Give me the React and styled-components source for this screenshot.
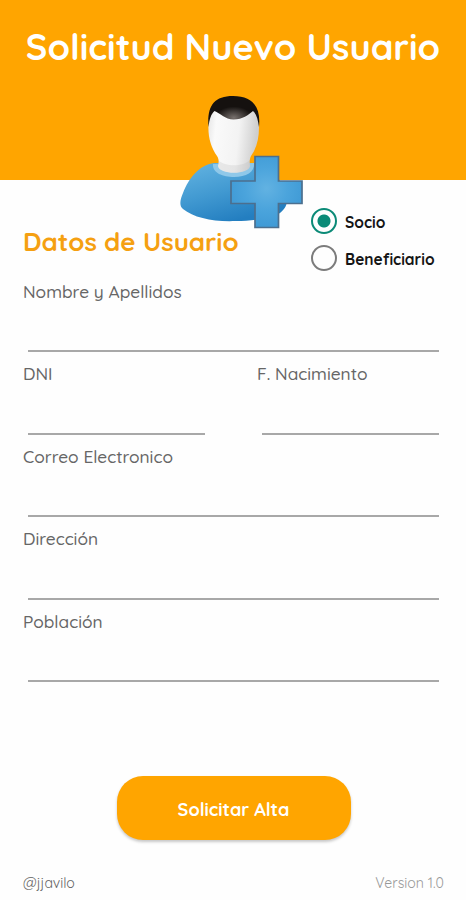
import { useState } from 'react';
import styled, { createGlobalStyle } from 'styled-components';

const GlobalStyle = createGlobalStyle`
  * {
    box-sizing: border-box;
  }
  body {
    margin: 0;
    background: #fefefe;
    font-family: Quicksand, Lato, 'Open Sans', sans-serif;
  }
`;

const Screen = styled.div`
  display: flex;
  flex-direction: column;
  width: 466px;
  height: 900px;
  background: #fefefe;
  overflow: hidden;
`;

const Header = styled.header`
  display: flex;
  flex-direction: column;
  align-items: center;
  flex: none;
  height: 180px;
  background: #ffa500;
`;

const Title = styled.h1`
  margin: 25px 0 0;
  font-weight: 700;
  font-size: 36.2px;
  line-height: 44px;
  white-space: nowrap;
  color: white;
`;

const Avatar = styled.svg`
  flex: none;
  width: 150px;
  height: 150px;
  margin: 16px 0 0 24px;
`;

const Form = styled.form`
  display: flex;
  flex-direction: column;
  flex: 1;
  padding: 24px 22px 0 23px;
`;

const Heading = styled.div`
  display: flex;
  justify-content: space-between;
  height: 76.6px;
`;

const Subtitle = styled.h2`
  margin: 21px 0 0;
  font-weight: 700;
  font-size: 25.9px;
  line-height: 32px;
  white-space: nowrap;
  color: #f5a011;
`;

const RadioGroup = styled.div`
  display: flex;
  flex-direction: column;
  width: 133px;
`;

const RadioOption = styled.label`
  display: flex;
  align-items: center;
  gap: 8px;
  height: 36.5px;
  font-weight: 700;
  font-size: 15.5px;
  color: #151515;
`;

const Radio = styled.input`
  appearance: none;
  flex: none;
  width: 26px;
  height: 26px;
  margin: -2px 0 0;
  border: 2.5px solid #7c7c7c;
  border-radius: 50%;
  &:checked {
    border-color: #0b8a77;
    background: radial-gradient(circle, #0b8a77 6px, transparent 7px);
  }
`;

const Row = styled.div`
  display: flex;
  justify-content: space-between;
`;

const Field = styled.label`
  display: flex;
  flex-direction: column;
  justify-content: space-between;
  width: ${({ $width }) => $width || '100%'};
  height: 71.5px;
  margin-bottom: 11px;
`;

const Label = styled.span`
  font-weight: 500;
  font-size: 17.3px;
  line-height: 21px;
  white-space: nowrap;
  color: #666;
`;

const Input = styled.input`
  height: 36px;
  margin: 0 5px;
  padding: 0 4px;
  border: 0;
  border-bottom: 2px solid #a8a8a8;
  outline: none;
  background: transparent;
  font: inherit;
`;

const SubmitButton = styled.button`
  align-self: center;
  width: 234px;
  height: 64px;
  margin-top: 83px;
  padding: 3px 0 0;
  border: 0;
  border-radius: 26px;
  background: #ffa500;
  box-shadow: 0 2px 3px rgba(0, 0, 0, 0.22);
  font-family: inherit;
  font-weight: 700;
  font-size: 18.1px;
  color: white;
`;

const Footer = styled.footer`
  display: flex;
  justify-content: space-between;
  height: 30px;
  padding: 2px 22px 0 23px;
  font-size: 14.1px;
  line-height: 22px;
`;

const Author = styled.span`
  color: #666;
`;

const Version = styled.span`
  color: #999;
`;

const NewUserIcon = () => (
  <Avatar viewBox="0 0 150 150">
    <defs>
      <linearGradient id="body" x1="0" y1="0" x2="0.5" y2="1">
        <stop offset="0" stopColor="#65b5e2" />
        <stop offset="0.55" stopColor="#4199d1" />
        <stop offset="1" stopColor="#237ec0" />
      </linearGradient>
      <linearGradient id="face" x1="0" y1="0" x2="1" y2="0.15">
        <stop offset="0" stopColor="#e3e3e3" />
        <stop offset="0.2" stopColor="#fafafa" />
        <stop offset="0.65" stopColor="#f3f3f3" />
        <stop offset="1" stopColor="#cfcfcf" />
      </linearGradient>
      <radialGradient id="hair" cx="0.5" cy="0.7" r="0.36">
        <stop offset="0" stopColor="#77706d" />
        <stop offset="1" stopColor="#15110f" />
      </radialGradient>
      <radialGradient id="plus" cx="0.5" cy="0.45" r="0.6">
        <stop offset="0" stopColor="#62b2e2" />
        <stop offset="0.5" stopColor="#4ba4dc" />
        <stop offset="1" stopColor="#3d98d4" />
      </radialGradient>
    </defs>
    <path
      d="M44 78C29 80 19 93 13 108C10 115 9 121 13 124C24 133 44 137 66 136C84 136 101 133 110 128C118 122 119 114 114 104C108 89 98 80 82 78Z"
      fill="url(#body)"
    />
    <path
      d="M43 79C42 88 53 92 64 92C76 92 85 87 84 78Z"
      fill="#8fc8e9"
    />
    <path
      d="M39 34C40 21 49 14 63 14C77 14 87 21 88.5 34C90 49 88 61 81 71C79.5 74 79.5 77 80 81C79 90 49 90 48 81C49 77 49 74 47 71C40 61 37 49 39 34Z"
      fill="url(#face)"
    />
    <path
      d="M48 75C55 82 73 82 80 75L80 81C79 90 49 90 48 81Z"
      fill="#aaa"
      opacity="0.2"
    />
    <path
      d="M38.5 42C37 22 43 11 63 11C83 11 91 22 89 42C88 35 86.5 29 83 26C78 30 73 34.5 63.5 34.5C55 34.5 50 28 44.5 26C41 29 39.5 34 38.5 42Z"
      fill="url(#hair)"
    />
    <path
      d="M85 71.5H108.5V96H132V118.5H108.5V142.5H85V118.5H61V96H85Z"
      fill="url(#plus)"
      stroke="#4c6f8e"
      strokeWidth="1.7"
    />
  </Avatar>
);

const App = () => {
  const [type, setType] = useState('socio');

  return (
    <Screen>
      <GlobalStyle />
      <Header>
        <Title>Solicitud Nuevo Usuario</Title>
        <NewUserIcon />
      </Header>
      <Form onSubmit={e => e.preventDefault()}>
        <Heading>
          <Subtitle>Datos de Usuario</Subtitle>
          <RadioGroup>
            <RadioOption>
              <Radio
                type="radio"
                name="type"
                checked={type === 'socio'}
                onChange={() => setType('socio')}
              />
              Socio
            </RadioOption>
            <RadioOption>
              <Radio
                type="radio"
                name="type"
                checked={type === 'beneficiario'}
                onChange={() => setType('beneficiario')}
              />
              Beneficiario
            </RadioOption>
          </RadioGroup>
        </Heading>
        <Field>
          <Label>Nombre y Apellidos</Label>
          <Input type="text" />
        </Field>
        <Row>
          <Field $width="187px">
            <Label>DNI</Label>
            <Input type="text" />
          </Field>
          <Field $width="187px">
            <Label>F. Nacimiento</Label>
            <Input type="text" />
          </Field>
        </Row>
        <Field>
          <Label>Correo Electronico</Label>
          <Input type="email" />
        </Field>
        <Field>
          <Label>Dirección</Label>
          <Input type="text" />
        </Field>
        <Field>
          <Label>Población</Label>
          <Input type="text" />
        </Field>
        <SubmitButton type="submit">Solicitar Alta</SubmitButton>
      </Form>
      <Footer>
        <Author>@jjavilo</Author>
        <Version>Version 1.0</Version>
      </Footer>
    </Screen>
  );
};

export default App;
